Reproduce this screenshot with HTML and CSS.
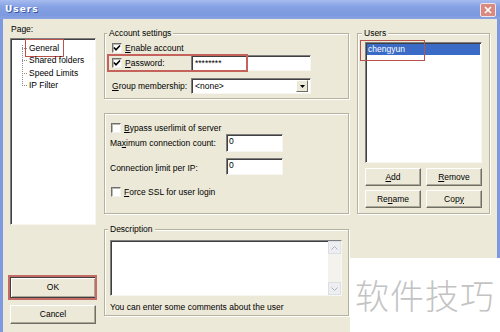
FILE: index.html
```html
<!DOCTYPE html>
<html lang="en">
<head>
    <meta charset="UTF-8">
    <meta name="viewport" content="width=device-width, initial-scale=1.0">
    <title>Users</title>
    <link rel="stylesheet" href="styles.css">
</head>
<body>
    <div class="window">
        <div class="titlebar">
            <span class="title">Users</span>
            <span class="close">
                <svg width="8" height="8" viewBox="0 0 8 8"><path d="M1 1 L7 7 M7 1 L1 7" stroke="#fff" stroke-width="1.6"/></svg>
            </span>
        </div>
        <div class="client">
            <div class="col-left">
                <div class="caption">Page:</div>
                <div class="tree sunken">
                    <ul>
                        <li><span class="item sel">General</span></li>
                        <li><span class="item">Shared folders</span></li>
                        <li><span class="item">Speed Limits</span></li>
                        <li><span class="item">IP Filter</span></li>
                    </ul>
                </div>
                <button class="btn btn-ok">OK</button>
                <button class="btn btn-cancel">Cancel</button>
            </div>

            <div class="col-mid">
                <fieldset class="group account">
                    <legend>Account settings</legend>
                    <div class="row row-check">
                        <span class="check on"><svg width="8" height="8" viewBox="0 0 8 8"><path d="M1 3.5 L3 5.8 L7 1.5" fill="none" stroke="#000" stroke-width="1.6"/></svg></span>
                        <span><u>E</u>nable account</span>
                    </div>
                    <div class="row row-pw">
                        <span class="lab"><span class="check on"><svg width="8" height="8" viewBox="0 0 8 8"><path d="M1 3.5 L3 5.8 L7 1.5" fill="none" stroke="#000" stroke-width="1.6"/></svg></span><u>P</u>assword:</span>
                        <span class="field sunken">********</span>
                        <span class="mark mark-pw"></span>
                    </div>
                    <div class="row row-gm">
                        <span class="lab"><u>G</u>roup membership:</span>
                        <span class="field select sunken">
                            <span>&lt;none&gt;</span>
                            <span class="drop"><svg width="5" height="3" viewBox="0 0 5 3"><path d="M0 0 H5 L2.5 3 Z" fill="#000"/></svg></span>
                        </span>
                    </div>
                </fieldset>

                <div class="group limits">
                    <div class="row row-check">
                        <span class="check"></span>
                        <span><u>B</u>ypass userlimit of server</span>
                    </div>
                    <div class="row row-num">
                        <span class="lab">Ma<u>x</u>imum connection count:</span>
                        <span class="field num sunken">0</span>
                    </div>
                    <div class="row row-num second">
                        <span class="lab">Connection <u>l</u>imit per IP:</span>
                        <span class="field num sunken">0</span>
                    </div>
                    <div class="row row-check last">
                        <span class="check"></span>
                        <span><u>F</u>orce SSL for user login</span>
                    </div>
                </div>

                <fieldset class="group description">
                    <legend>Description</legend>
                    <div class="memo sunken">
                        <div class="memo-text"></div>
                        <div class="scroll">
                            <span class="arrow"><svg width="7" height="4" viewBox="0 0 7 4"><path d="M0.5 3.5 L3.5 0.5 L6.5 3.5" fill="none" stroke="#a9b4c8" stroke-width="1"/></svg></span>
                            <span class="arrow"><svg width="7" height="4" viewBox="0 0 7 4"><path d="M0.5 0.5 L3.5 3.5 L6.5 0.5" fill="none" stroke="#a9b4c8" stroke-width="1"/></svg></span>
                        </div>
                    </div>
                    <div class="hint">You can enter some comments about the user</div>
                </fieldset>
            </div>

            <div class="col-right">
                <fieldset class="group users">
                    <legend>Users</legend>
                    <div class="user-list sunken">
                        <div class="user selected">chengyun</div>
                        <span class="mark mark-user"></span>
                    </div>
                    <div class="user-buttons">
                        <button class="btn"><u>A</u>dd</button>
                        <button class="btn"><u>R</u>emove</button>
                        <button class="btn">Re<u>n</u>ame</button>
                        <button class="btn">Cop<u>y</u></button>
                    </div>
                </fieldset>
            </div>
        </div>
        <div class="watermark">软件技巧</div>
    </div>
</body>
</html>
```

FILE: styles.css
```css
* {
    box-sizing: border-box;
}
body {
    margin: 0;
    width: 500px;
    height: 332px;
    overflow: hidden;
    font-family: "Liberation Sans", Arial, sans-serif;
    font-size: 8.5px;
    line-height: 11px;
    color: #000;
    background: #fff;
}
u {
    text-decoration: underline;
    text-underline-offset: 1px;
}
fieldset {
    margin: 0;
    padding: 0;
    min-width: 0;
}
.window {
    position: relative;
    width: 500px;
    height: 332px;
    display: flex;
    flex-direction: column;
    background: #ece9d8;
}
.titlebar {
    height: 19px;
    display: flex;
    align-items: center;
    justify-content: space-between;
    padding: 0 4px 0 5px;
    background: linear-gradient(#a7bcef, #86a2e4 35%, #7d99df 80%, #8aa4e2);
}
.title {
    color: #fff;
    font-family: "DejaVu Sans", sans-serif;
    font-weight: bold;
    font-size: 9px;
    letter-spacing: 1px;
    text-shadow: 1px 1px 0 #3a56a8;
}
.close {
    width: 16px;
    height: 14px;
    display: flex;
    align-items: center;
    justify-content: center;
    background: #d98a80;
    border: 1px solid #f2e4e8;
    border-radius: 2px;
}
.client {
    flex: 1;
    display: flex;
    gap: 8px;
    padding: 5px 0 0 7px;
    border-left: 3px solid #7d9ae0;
    border-right: 3px solid #7d9ae0;
}
.sunken {
    background: #fff;
    border: 1px solid;
    border-color: #7f7f7f #f7f6f1 #f7f6f1 #7f7f7f;
    box-shadow: inset 1px 1px 0 #3f3f3f;
}
.mark {
    position: absolute;
    border: 2px solid #c5625c;
    pointer-events: none;
}

/* left column */
.col-left {
    width: 86px;
    display: flex;
    flex-direction: column;
}
.caption {
    padding-left: 1px;
}
.tree {
    height: 187px;
    margin-top: 3px;
    padding: 3px 0 0 11px;
}
.tree ul {
    position: relative;
    list-style: none;
    margin: 0;
    padding: 0 0 0 6px;
}
.tree ul::before {
    content: "";
    position: absolute;
    left: 0;
    top: 3px;
    bottom: 6px;
    border-left: 1px dotted #8c8c8c;
}
.tree li {
    position: relative;
    line-height: 12.4px;
}
.tree li::before {
    content: "";
    position: absolute;
    left: -6px;
    top: 6px;
    width: 5px;
    border-top: 1px dotted #8c8c8c;
}
.item {
    position: relative;
    padding-left: 1px;
}
.item.sel::after {
    content: "";
    position: absolute;
    left: -3px;
    top: -4px;
    width: 37px;
    height: 16px;
    border: 1px solid #b8524a;
}
.btn {
    font: inherit;
    color: #000;
    padding: 0;
    background: #ece9d8;
    border: 1px solid;
    border-color: #fff #716f64 #716f64 #fff;
    box-shadow: inset -1px -1px 0 #aca899;
    cursor: pointer;
}
.btn-ok {
    position: relative;
    height: 21px;
    margin-top: 52px;
    border-color: #404040;
    box-shadow: inset 1px 1px 0 #fff, inset -1px -1px 0 #aca899;
}
.btn-ok::after {
    content: "";
    position: absolute;
    left: -3px;
    top: -3px;
    right: -2px;
    bottom: -3px;
    border: 2px solid #c46b66;
}
.btn-cancel {
    height: 19px;
    margin-top: 7px;
}

/* middle column */
.col-mid {
    width: 245px;
    display: flex;
    flex-direction: column;
}
.group {
    border: 1px solid #b5b29f;
    box-shadow: inset 1px 1px 0 #fff, 1px 1px 0 #fff;
}
legend {
    padding: 0 2px;
    line-height: 11px;
    background: #ece9d8;
}
.row {
    position: relative;
    display: flex;
    align-items: center;
}
.check {
    width: 10px;
    height: 10px;
    margin-right: 3px;
    flex: none;
    display: inline-flex;
    align-items: center;
    justify-content: center;
    background: #fff;
    border: 1px solid;
    border-color: #6f6f6f #f2f1ea #f2f1ea #6f6f6f;
    box-shadow: inset 1px 1px 0 #b9b9b0;
}
.account {
    margin-top: 4px;
    padding: 3px 0 4px 7px;
}
.account legend {
    margin-left: -5px;
}
.account .row-check {
    height: 12px;
}
.account .lab {
    width: 79px;
    display: flex;
    align-items: center;
}
.account .field {
    width: 120px;
    height: 16px;
    padding: 2px 3px;
}
.row-pw {
    margin-top: 1px;
}
.mark-pw {
    left: -5px;
    top: -1px;
    width: 141px;
    height: 18px;
}
.row-gm {
    margin-top: 7px;
}
.select {
    display: flex;
    align-items: center;
    justify-content: space-between;
    padding: 1px 2px 1px 3px !important;
}
.drop {
    width: 12px;
    height: 12px;
    display: flex;
    align-items: center;
    justify-content: center;
    background: #ece9d8;
    border: 1px solid;
    border-color: #fff #716f64 #716f64 #fff;
}
.limits {
    margin-top: 14px;
    padding: 8px 0 15px 5px;
}
.limits .row-check {
    height: 12px;
    padding-left: 1px;
}
.limits .lab {
    width: 116px;
}
.num {
    width: 57px;
    height: 18px;
    padding: 1px 2px;
}
.row-num.second {
    margin-top: 6px;
}
.row-num.second .num {
    height: 17px;
}
.row-num.second .lab {
    padding-top: 3px;
}
.limits .last {
    margin-top: 11px;
}
.description {
    margin-top: 10px;
    padding: 5px 0 2px 5px;
}
.description legend {
    margin-left: -2px;
}
.memo {
    width: 232px;
    height: 56px;
    display: flex;
}
.memo-text {
    flex: 1;
}
.scroll {
    width: 13px;
    display: flex;
    flex-direction: column;
    justify-content: space-between;
    background: #f3f2ec;
}
.arrow {
    height: 13px;
    display: flex;
    align-items: center;
    justify-content: center;
    background: #eeeef0;
    border: 1px solid #dcdfe8;
}
.hint {
    margin-top: 6px;
}

/* right column */
.col-right {
    width: 133px;
}
.users {
    margin-top: 4px;
    padding: 3px 7px 5px 7px;
}
.users legend {
    margin-left: -3px;
}
.user-list {
    position: relative;
    height: 121px;
    padding: 1px 1px 0 1px;
}
.user {
    height: 11px;
    line-height: 11px;
    padding-left: 1px;
}
.user.selected {
    background: #3a6bc6;
    color: #fff;
}
.mark-user {
    left: -6px;
    top: -3px;
    width: 65px;
    height: 21px;
    border-width: 1px;
    border-color: #b8524a;
}
.user-buttons {
    display: grid;
    grid-template-columns: 56px 56px;
    gap: 4px 5px;
    margin-top: 5px;
}
.user-buttons .btn {
    height: 18px;
}

.watermark {
    position: absolute;
    left: 350px;
    top: 258px;
    width: 150px;
    height: 74px;
    padding-left: 5px;
    background: #fff;
    color: #c3c3c3;
    font-family: "Noto Sans CJK SC", sans-serif;
    font-weight: 300;
    font-size: 34px;
    line-height: 74px;
    letter-spacing: 1px;
}
```
